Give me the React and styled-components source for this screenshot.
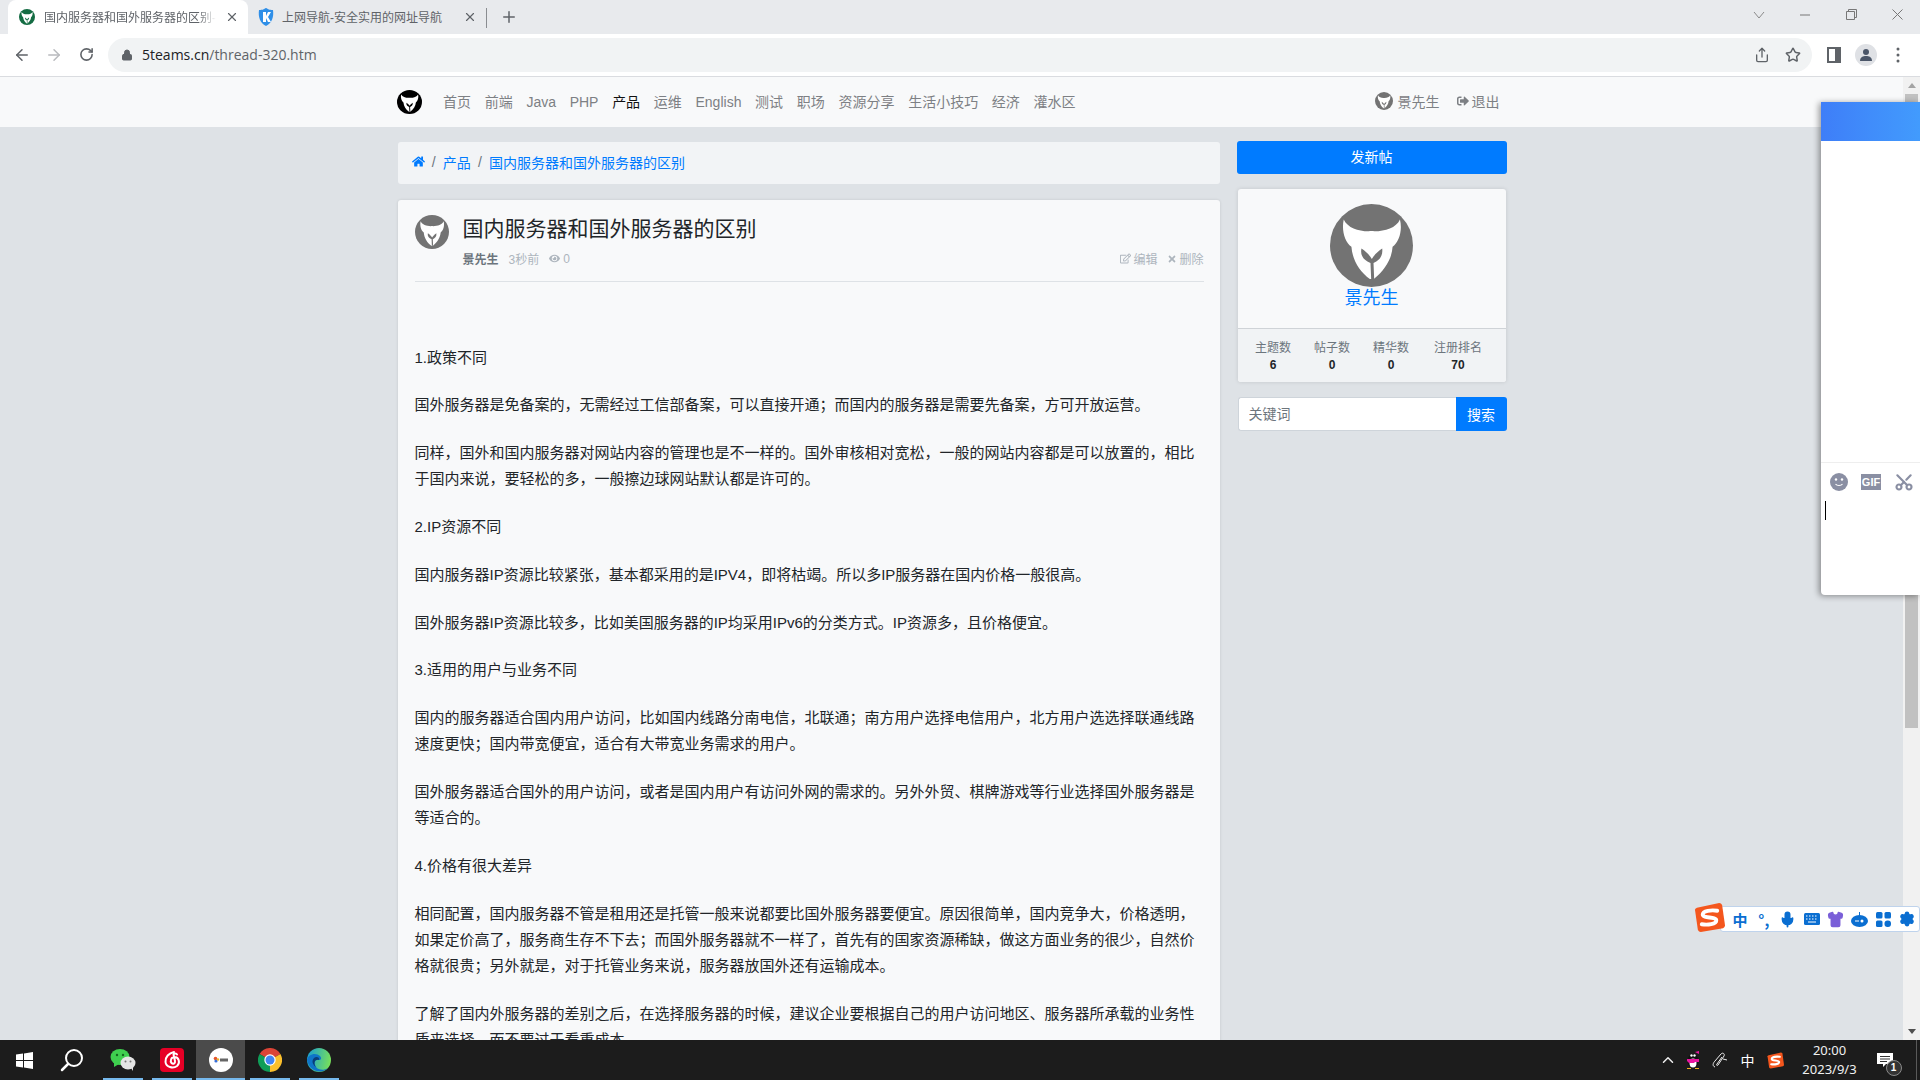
import React from "react";
import styled, { createGlobalStyle } from "styled-components";
import { ArrowLeft, ArrowRight, RotateCw, Lock, Star, Share, X, Plus, Mic, Shirt, Settings, Scissors, ChevronUp } from "lucide-react";
import { FaHome, FaRegEdit, FaTimes, FaEye, FaSignOutAlt } from "react-icons/fa";

const GlobalStyle = createGlobalStyle`
html, body { margin: 0; padding: 0; height: 100%; overflow: hidden; }
body { font-family: "Liberation Sans", "Noto Sans CJK SC", sans-serif; color: #212529; }
* { box-sizing: border-box; }
`

const Screen = styled.div`
position: relative;
display: flex;
flex-direction: column;
height: 100vh;
overflow: hidden;
background-color: #dee2e6;
`

/* browser chrome */
const TabStrip = styled.div`
display: flex;
align-items: stretch;
height: 34px;
padding-left: 8px;
background-color: #e8eaed;
flex-shrink: 0;
`
const Tab = styled.div`
display: flex;
align-items: center;
width: ${p => p.$active ? 240 : 238}px;
padding: 0 9px 0 ${p => p.$active ? 11 : 10}px;
gap: ${p => p.$active ? 9 : 8}px;
background-color: ${p => p.$active ? "#fff" : "transparent"};
border-radius: 8px 8px 0 0;
font-size: 12px;
color: #5f6368;
`
const TabTitle = styled.span`
flex: 1;
padding-bottom: 2px;
white-space: nowrap;
overflow: hidden;
-webkit-mask-image: ${p => p.$fade ? "linear-gradient(to right, #000 90%, transparent)" : "none"};
`
const TabClose = styled(X)`
width: 14px;
height: 14px;
color: #5f6368;
flex-shrink: 0;
`
const TabDivider = styled.div`
width: 1px;
height: 20px;
margin-top: 8px;
background-color: #8a8d91;
`
const NewTab = styled(Plus)`
width: 18px;
height: 18px;
margin: 8px 0 0 13px;
color: #5f6368;
`
const WindowButtons = styled.div`
display: flex;
margin-left: auto;
`
const WindowButton = styled.div`
width: 46px;
display: flex;
align-items: center;
justify-content: center;
padding-bottom: 5px;
color: #777;
`
const Toolbar = styled.div`
display: flex;
align-items: center;
height: 43px;
padding: 0 6px 1px;
background-color: #fff;
border-bottom: 1px solid #dadce0;
flex-shrink: 0;
`
const ToolButton = styled.div`
width: 32px;
display: flex;
justify-content: center;
align-items: center;
color: ${p => p.$muted ? "#b9bbbe" : "#5f6368"};
`
const UrlPill = styled.div`
flex: 1;
display: flex;
align-items: center;
height: 34px;
margin: 0 6px;
padding: 0 11px 0 13px;
border-radius: 17px;
background-color: #f1f3f4;
font-size: 14px;
font-family: "Open Sans", sans-serif;
color: #5f6368;
`
const UrlHost = styled.span`
color: #202124;
margin-left: 9px;
`
const UrlActions = styled.div`
display: flex;
margin-left: auto;
gap: 15px;
color: #5f6368;
`
const PanelIcon = styled.div`
width: 14px;
height: 16px;
border: 2px solid #5f6368;
border-right-width: 6px;
`
const ProfileCircle = styled.div`
width: 22px;
height: 22px;
border-radius: 50%;
background-color: #dfe1e5;
display: flex;
align-items: center;
justify-content: center;
`

/* page */
const Viewport = styled.div`
position: relative;
display: flex;
flex: 1;
min-height: 0;
`
const Page = styled.div`
flex: 1;
min-width: 0;
overflow: hidden;
`
const Navbar = styled.div`
height: 50px;
background-color: #f8f9fa;
`
const Container = styled.div`
width: 1140px;
margin: 0 auto;
padding: 0 15px;
`
const NavInner = styled(Container)`
display: flex;
align-items: center;
height: 100%;
font-size: 14px;
`
const NavLinks = styled.div`
display: flex;
align-items: baseline;
gap: 13.7px;
margin-left: 21.5px;
padding-bottom: 2px;
`
const NavLink = styled.span`
color: ${p => p.$active ? "#111" : "#7d8084"};
`
const NavUser = styled.div`
display: flex;
align-items: center;
margin-left: auto;
padding: 0 7px 2px 0;
color: #7d8084;
gap: 5px;
`
const Logout = styled.span`
display: flex;
align-items: center;
gap: 3px;
margin-left: 12px;
`
const MainGrid = styled(Container)`
display: grid;
grid-template-columns: 825px 270px;
gap: 15px;
padding-top: 15px;
`
const Breadcrumb = styled.div`
display: flex;
align-items: center;
height: 42px;
margin: 0 1.5px 16px;
padding: 0 13.5px 3px;
gap: 7.2px;
font-size: 14px;
border-radius: 3px;
background-color: #f2f4f6;
color: #6c757d;
`
const Crumb = styled.span`
color: #007bff;
display: flex;
`
const PostCard = styled.div`
margin: 0 1.5px;
padding: 15px 16.5px;
border-radius: 3px;
background-color: #f8f9fa;
box-shadow: 0 0 3px rgba(0, 0, 0, 0.12);
`
const PostHead = styled.div`
display: flex;
gap: 14px;
height: 67px;
border-bottom: 1px solid #dee2e6;
`
const PostHeadMain = styled.div`
flex: 1;
`
const PostTitle = styled.div`
font-size: 21px;
line-height: 28px;
margin-bottom: 7px;
color: #212529;
`
const MetaRow = styled.div`
display: flex;
align-items: center;
font-size: 12px;
color: #adb5bd;
`
const MetaAuthor = styled.span`
font-weight: bold;
color: #6c757d;
margin-right: 10px;
`
const MetaItem = styled.span`
display: flex;
align-items: center;
gap: 3px;
margin-right: 10px;
`
const MetaActions = styled.div`
display: flex;
gap: 10px;
margin-left: auto;
`
const MetaAction = styled.span`
display: flex;
align-items: center;
gap: 2px;
`
const Article = styled.div`
padding-top: 62.5px;
font-size: 15px;
line-height: 26.25px;
color: #212529;
`
const Para = styled.p`
margin: 0 0 21.5px;
`
const Sidebar = styled.div`
display: flex;
flex-direction: column;
margin-top: -1px;
`
const NewPostButton = styled.div`
height: 33px;
margin-bottom: 15px;
padding-bottom: 3px;
display: flex;
align-items: center;
justify-content: center;
border-radius: 3px;
background-color: #007bff;
color: #fff;
font-size: 14px;
`
const UserCard = styled.div`
margin: 0 1px 15px;
height: 193px;
border-radius: 3px;
background-color: #f8f9fa;
box-shadow: 0 0 4px rgba(0, 0, 0, 0.12);
overflow: hidden;
`
const UserTop = styled.div`
height: 140px;
padding-top: 15px;
display: flex;
flex-direction: column;
align-items: center;
border-bottom: 1px solid #cfd3d7;
`
const UserName = styled.div`
font-size: 18px;
line-height: 22px;
color: #007bff;
`
const StatRow = styled.div`
display: grid;
grid-template-columns: 59px 59px 59px 75px;
padding: 9px 0 0 6px;
height: 53px;
background-color: #f1f3f5;
text-align: center;
font-size: 12px;
color: #6c757d;
`
const StatValue = styled.div`
font-weight: bold;
color: #212529;
margin-top: 3px;
`
const SearchRow = styled.div`
display: flex;
margin-left: 1px;
height: 34px;
`
const SearchInput = styled.input`
width: 218px;
height: 100%;
padding: 0 10px;
border: 1px solid #ced4da;
border-right: 0;
border-radius: 3px 0 0 3px;
font-size: 14px;
font-family: "Liberation Sans", "Noto Sans CJK SC", sans-serif;
background-color: #fff;
&::placeholder { color: #6c757d; }
`
const SearchButton = styled.div`
flex: 1;
display: flex;
align-items: center;
justify-content: center;
border-radius: 0 3px 3px 0;
background-color: #007bff;
color: #fff;
font-size: 14px;
`

/* scrollbar */
const Scrollbar = styled.div`
width: 17px;
flex-shrink: 0;
display: flex;
flex-direction: column;
align-items: center;
background-color: #f1f1f1;
`
const ScrollArrow = styled.div`
height: 17px;
flex-shrink: 0;
display: flex;
align-items: center;
justify-content: center;
&::before {
  content: "";
  border-left: 4px solid transparent;
  border-right: 4px solid transparent;
  ${p => p.$down ? "border-top: 5px solid #505050;" : "border-bottom: 5px solid #a3a3a3;"}
}
`
const ScrollThumb = styled.div`
width: 13px;
height: 634px;
background-color: #c1c1c1;
`
const ScrollGap = styled.div`
flex: 1;
`

/* floating chat window */
const ChatWindow = styled.div`
position: absolute;
top: 25px;
right: 0;
width: 99px;
height: 493px;
display: flex;
flex-direction: column;
background-color: #fff;
border-radius: 0 0 0 4px;
box-shadow: -2px 1px 6px rgba(0, 0, 0, 0.4);
`
const ChatHeader = styled.div`
height: 39px;
background: linear-gradient(90deg, #3e7ef8, #429bfd);
`
const ChatMessages = styled.div`
height: 322px;
border-bottom: 1px solid #eeeeee;
`
const ChatTools = styled.div`
display: flex;
align-items: center;
gap: 13px;
height: 38px;
padding-left: 9px;
color: #8a8fa3;
`
const GifIcon = styled.div`
width: 20px;
height: 16px;
background-color: #8a8fa3;
color: #fff;
font-size: 11px;
font-weight: bold;
line-height: 16px;
text-align: center;
`
const ScissorsIcon = styled(Scissors)`
width: 20px;
height: 20px;
transform: rotate(-90deg);
`
const Caret = styled.div`
width: 1px;
height: 19px;
margin-left: 4px;
background-color: #000;
`

/* IME toolbar */
const ImeBar = styled.div`
position: absolute;
right: 0;
bottom: 108px;
width: 200px;
height: 26px;
display: flex;
align-items: center;
padding-left: 7px;
background-color: #fff;
border: 1px solid #bfd3ec;
border-radius: 3px;
color: #0a6ed1;
`
const ImeCell = styled.div`
width: 24px;
display: flex;
align-items: center;
justify-content: center;
font-size: 15px;
font-weight: bold;
font-family: "Noto Sans CJK SC", sans-serif;
`
const ImeLogo = styled.div`
position: absolute;
left: -27px;
top: -5px;
`

/* taskbar */
const Taskbar = styled.div`
display: flex;
height: 40px;
flex-shrink: 0;
background-color: #1c1c1c;
`
const TaskPlain = styled.div`
width: 48px;
display: flex;
align-items: center;
justify-content: center;
`
const TaskApps = styled.div`
display: flex;
margin-left: 2px;
`
const TaskApp = styled.div`
position: relative;
width: 49px;
display: flex;
align-items: center;
justify-content: center;
background-color: ${p => p.$active ? "#4b4b4b" : "transparent"};
&::after {
  content: "";
  position: absolute;
  left: ${p => p.$active ? 0 : 5}px;
  right: ${p => p.$active ? 0 : 4}px;
  bottom: 0;
  height: 2px;
  background-color: #76b9ed;
}
`
const Tray = styled.div`
display: flex;
align-items: center;
margin-left: auto;
color: #fff;
`
const TrayItem = styled.div`
position: relative;
width: ${p => p.$w}px;
display: flex;
align-items: center;
justify-content: center;
font-size: 14px;
`
const Clock = styled.div`
width: 80px;
text-align: center;
font-size: 13px;
line-height: 19px;
color: #f0f0f0;
font-family: "Noto Sans", sans-serif;
`
const NoticeBadge = styled.div`
position: absolute;
right: -2px;
top: 7px;
width: 16px;
height: 16px;
border-radius: 50%;
background-color: #333;
border: 1px solid #8a8a8a;
font-size: 10px;
font-weight: bold;
line-height: 14px;
text-align: center;
`
const ShowDesktop = styled.div`
width: 17.5px;
height: 100%;
border-right: 1px solid #5a5a5a;
margin-right: 3px;
`

const TeamLogo = ({ size, bg = "#737373", fg = "#fff", height }) => (
    <svg width={size} height={height || size} viewBox="331 222 248 248" preserveAspectRatio="none">
        <circle cx="455" cy="346" r="124" fill={bg} />
        <path fill={fg} d="M372 268 C385 295 420 305 455 303 C490 305 528 295 540 268 C548 300 538 335 518 350 C516 385 495 420 462 446 L450 446 C420 425 398 390 395 350 C375 335 365 300 372 268 Z" />
        <path fill={bg} d="M425 355 C440 365 450 376 456 386 C462 376 472 365 487 355 C490 378 477 392 461 398 L463 446 L454 446 L452 398 C435 392 420 378 425 355 Z" />
    </svg>
)

const ShieldK = () => (
    <svg width="16" height="18" viewBox="0 0 16 18">
        <path fill="#2f8fe8" d="M1 2 C5 2 6 1 8 0 C10 1 11 2 15 2 C16 9 14 15 8 18 C2 15 0 9 1 2 Z" />
        <path fill="#fff" d="M5 4 H8 V8 L10 4 H13 L10 9 L13 14 H10 L8 10 V14 H5 Z" />
    </svg>
)

const SogouLogo = ({ size = 31 }) => (
    <svg width={size} height={size} viewBox="0 0 32 32">
        <path fill="#f4561d" d="M3 6 L26 1 Q28 1 29 3 L32 24 Q32 26 30 27 L7 31 Q5 31 4 29 L1 8 Q1 7 3 6 Z" />
        <path fill="none" stroke="#fff" strokeWidth="4" strokeLinecap="round" d="M24 9 C18 8 9 9 9 13 C9 17 23 15 23 19 C23 23 14 24 8 23" />
    </svg>
)

const WindowsIcon = () => (
    <svg width="17" height="17" viewBox="0 0 17 17" fill="#fff">
        <path d="M0 2.5 L7 1.5 V8 H0 Z M8 1.4 L17 0 V8 H8 Z M0 9 H7 V15.5 L0 14.5 Z M8 9 H17 V17 L8 15.6 Z" />
    </svg>
)

const SearchIcon = () => (
    <svg width="24" height="24" viewBox="0 0 24 24" fill="none" stroke="#fff" strokeWidth="2">
        <circle cx="14" cy="10" r="8" />
        <path d="M8 16 L2 22" strokeWidth="2.5" strokeLinecap="round" />
    </svg>
)

const WeChatIcon = () => (
    <svg width="26" height="24" viewBox="0 0 26 24">
        <ellipse cx="10" cy="9" rx="9.5" ry="8" fill="#3fcf4f" />
        <path d="M4 14 L4 19 L9 16 Z" fill="#3fcf4f" />
        <circle cx="7" cy="7" r="1.2" fill="#14691f" />
        <circle cx="13" cy="7" r="1.2" fill="#14691f" />
        <ellipse cx="18" cy="15" rx="7.5" ry="6.5" fill="#e4e4e4" />
        <path d="M21 20 L23 23 L23 18 Z" fill="#e4e4e4" />
        <circle cx="15.5" cy="13.5" r="1" fill="#777" />
        <circle cx="20.5" cy="13.5" r="1" fill="#777" />
    </svg>
)

const NeteaseIcon = () => (
    <svg width="24" height="24" viewBox="0 0 24 24">
        <rect width="24" height="24" rx="4" fill="#e60026" />
        <path fill="none" stroke="#fff" strokeWidth="2" strokeLinecap="round" d="M14 4 C9 5 5 9 5.500 14 C6 19 13 21 17 18 C20.500 15 19 9 14.500 9 C11 9 10 13 11.500 15 C13 16.500 15.500 15.500 15 13 L13.500 6.500 C14 5 16.500 5 17 6.500" />
    </svg>
)

const MeetingIcon = () => (
    <svg width="24" height="24" viewBox="0 0 24 24">
        <circle cx="12" cy="12" r="12" fill="#fff" />
        <circle cx="6.500" cy="10.500" r="1.800" fill="#e8562a" />
        <circle cx="7" cy="13" r="1.600" fill="#3a6fd8" />
        <circle cx="9" cy="11.500" r="1.200" fill="#f0b429" />
        <rect x="11" y="10.500" width="8" height="3" fill="#666" />
    </svg>
)

const ChromeIcon = () => (
    <svg width="24" height="24" viewBox="0 0 24 24">
        <path fill="#db4437" d="M12 12 L1.600 6 A12 12 0 0 1 22.400 6 Z" />
        <path fill="#fbc02d" d="M12 12 L22.400 6 A12 12 0 0 1 12 24 Z" />
        <path fill="#0f9d58" d="M12 12 L12 24 A12 12 0 0 1 1.600 6 Z" />
        <circle cx="12" cy="12" r="5.700" fill="#fff" />
        <circle cx="12" cy="12" r="4.500" fill="#4285f4" />
    </svg>
)

const EdgeIcon = () => (
    <svg width="24" height="24" viewBox="0 0 24 24">
        <defs>
            <linearGradient id="edgeTop" x1="0" y1="0.300" x2="1" y2="0.500">
                <stop offset="0" stopColor="#1a9fd0" />
                <stop offset="1" stopColor="#78e05a" />
            </linearGradient>
        </defs>
        <circle cx="12" cy="12" r="12" fill="url(#edgeTop)" />
        <path fill="#0f74c8" d="M0 12 C1 6 9 4 13 8 C15 10 14 12 12 12 C8 11 6 15 9 19 C11 22 17 23 21 20 C16 26 3 25 0 12 Z" />
        <path fill="#0a3d78" d="M12 12 C8 11 6 15 9 19 C6 17 4 13 7 10 C9 8 13 9 12 12 Z" />
    </svg>
)

const QQIcon = () => (
    <svg width="16" height="18" viewBox="0 0 16 18">
        <ellipse cx="8" cy="10" rx="5.500" ry="7" fill="#111" />
        <ellipse cx="8" cy="12" rx="3.500" ry="4.500" fill="#fff" />
        <circle cx="6.500" cy="4.500" r="1.200" fill="#fff" />
        <circle cx="9.500" cy="4.500" r="1.200" fill="#fff" />
        <path d="M2 8 H14 V11 H10 L9 12 H4 L2 10 Z" fill="#e815a0" />
        <path d="M10 1 L14 0 V3 Z" fill="#e815a0" />
        <path d="M2 17 H6 V18 H2 Z M10 17 H14 V18 H10 Z" fill="#f2b01e" />
    </svg>
)

const PenIcon = () => (
    <svg width="17" height="17" viewBox="0 0 17 17" fill="none" stroke="#eee" strokeWidth="1">
        <path d="M4 15 C1 14 2 11 4 9 L10 2 C12 0 14 2 13 4 L7 13 C6 14 5 13 6 12 L11 5" />
        <path d="M12 7 L16 8" />
    </svg>
)

const NoticeIcon = () => (
    <svg width="16" height="15" viewBox="0 0 16 15">
        <path fill="#fff" d="M0 0 H16 V11 H9 L6 14 V11 H0 Z" />
        <path stroke="#333" d="M3 3.500 H13 M3 6 H13 M3 8.500 H10" />
    </svg>
)

const SmileIcon = () => (
    <svg width="18" height="18" viewBox="0 0 18 18">
        <circle cx="9" cy="9" r="9" fill="#8a8fa3" />
        <circle cx="6" cy="6.500" r="1.200" fill="#fff" />
        <circle cx="12" cy="6.500" r="1.200" fill="#fff" />
        <path d="M5.500 11 C7 13 11 13 12.500 11" stroke="#fff" strokeWidth="1.200" fill="none" />
    </svg>
)

const KeyboardIcon = () => (
    <svg width="16" height="12" viewBox="0 0 16 12">
        <rect width="16" height="12" rx="1.500" fill="#0a6ed1" />
        <path stroke="#fff" strokeDasharray="1.500 1.500" d="M2 3 H14 M2 6 H14" />
        <path stroke="#fff" d="M4 9 H12" />
    </svg>
)

const RobotIcon = () => (
    <svg width="17" height="15" viewBox="0 0 17 15">
        <ellipse cx="8.500" cy="9" rx="8.500" ry="6" fill="#0a6ed1" />
        <rect x="8" y="0" width="1" height="4" fill="#0a6ed1" />
        <circle cx="11" cy="9" r="1.500" fill="#fff" />
        <rect x="4" y="8.500" width="4" height="1" fill="#fff" />
    </svg>
)

const GridIcon = () => (
    <svg width="15" height="15" viewBox="0 0 15 15" fill="#0a6ed1">
        <rect width="6.500" height="6.500" rx="1.500" />
        <rect x="8.500" width="6.500" height="6.500" rx="1.500" />
        <rect y="8.500" width="6.500" height="6.500" rx="1.500" />
        <rect x="8.500" y="8.500" width="6.500" height="6.500" rx="3" />
    </svg>
)

const navItems = ["首页", "前端", "Java", "PHP", "产品", "运维", "English", "测试", "职场", "资源分享", "生活小技巧", "经济", "灌水区"]

const stats = [
    { label: "主题数", value: 6 },
    { label: "帖子数", value: 0 },
    { label: "精华数", value: 0 },
    { label: "注册排名", value: 70 },
]

const paragraphs = [
    "1.政策不同",
    "国外服务器是免备案的，无需经过工信部备案，可以直接开通；而国内的服务器是需要先备案，方可开放运营。",
    "同样，国外和国内服务器对网站内容的管理也是不一样的。国外审核相对宽松，一般的网站内容都是可以放置的，相比于国内来说，要轻松的多，一般擦边球网站默认都是许可的。",
    "2.IP资源不同",
    "国内服务器IP资源比较紧张，基本都采用的是IPV4，即将枯竭。所以多IP服务器在国内价格一般很高。",
    "国外服务器IP资源比较多，比如美国服务器的IP均采用IPv6的分类方式。IP资源多，且价格便宜。",
    "3.适用的用户与业务不同",
    "国内的服务器适合国内用户访问，比如国内线路分南电信，北联通；南方用户选择电信用户，北方用户选选择联通线路速度更快；国内带宽便宜，适合有大带宽业务需求的用户。",
    "国外服务器适合国外的用户访问，或者是国内用户有访问外网的需求的。另外外贸、棋牌游戏等行业选择国外服务器是等适合的。",
    "4.价格有很大差异",
    "相同配置，国内服务器不管是租用还是托管一般来说都要比国外服务器要便宜。原因很简单，国内竞争大，价格透明，如果定价高了，服务商生存不下去；而国外服务器就不一样了，首先有的国家资源稀缺，做这方面业务的很少，自然价格就很贵；另外就是，对于托管业务来说，服务器放国外还有运输成本。",
    "了解了国内外服务器的差别之后，在选择服务器的时候，建议企业要根据自己的用户访问地区、服务器所承载的业务性质来选择，而不要过于看重成本。",
]

const App = () => {
    return (
        <Screen>
            <GlobalStyle />
            <TabStrip>
                <Tab $active>
                    <TeamLogo size={16} bg="#146c43" />
                    <TabTitle $fade>国内服务器和国外服务器的区别-互联网</TabTitle>
                    <TabClose />
                </Tab>
                <Tab>
                    <ShieldK />
                    <TabTitle>上网导航-安全实用的网址导航</TabTitle>
                    <TabClose />
                </Tab>
                <TabDivider />
                <NewTab />
                <WindowButtons>
                    <WindowButton>
                        <svg width="12" height="8" viewBox="0 0 12 8" fill="none" stroke="#8a8a8a"><path d="M1 1 L6 7 L11 1" /></svg>
                    </WindowButton>
                    <WindowButton>
                        <svg width="10" height="2" viewBox="0 0 10 2" stroke="#777"><path d="M0 1 H10" /></svg>
                    </WindowButton>
                    <WindowButton>
                        <svg width="11" height="11" viewBox="0 0 11 11" fill="none" stroke="#777"><path d="M.5 2.500 H8.500 V10.500 H.5 Z M2.500 2.500 V.5 H10.500 V8.500 H8.500" /></svg>
                    </WindowButton>
                    <WindowButton>
                        <svg width="11" height="11" viewBox="0 0 11 11" stroke="#777"><path d="M.5 .5 L10.500 10.500 M10.500 .5 L.5 10.500" /></svg>
                    </WindowButton>
                </WindowButtons>
            </TabStrip>
            <Toolbar>
                <ToolButton><ArrowLeft size={18} /></ToolButton>
                <ToolButton $muted><ArrowRight size={18} /></ToolButton>
                <ToolButton><RotateCw size={15} strokeWidth={2.5} /></ToolButton>
                <UrlPill>
                    <Lock size={12} fill="#5f6368" />
                    <UrlHost>5teams.cn</UrlHost>/thread-320.htm
                    <UrlActions>
                        <Share size={16} />
                        <Star size={16} strokeWidth={2.2} />
                    </UrlActions>
                </UrlPill>
                <ToolButton><PanelIcon /></ToolButton>
                <ToolButton>
                    <ProfileCircle>
                        <svg width="14" height="14" viewBox="0 0 14 14" fill="#4a5568">
                            <circle cx="7" cy="4" r="3" />
                            <path d="M1 13 C1 9 4 8 7 8 C10 8 13 9 13 13 Z" />
                        </svg>
                    </ProfileCircle>
                </ToolButton>
                <ToolButton>
                    <svg width="4" height="16" viewBox="0 0 4 16" fill="#5f6368">
                        <circle cx="2" cy="2" r="1.500" /><circle cx="2" cy="8" r="1.500" /><circle cx="2" cy="14" r="1.500" />
                    </svg>
                </ToolButton>
            </Toolbar>
            <Viewport>
                <Page>
                    <Navbar>
                        <NavInner>
                            <TeamLogo size={25} height={24} bg="#000" />
                            <NavLinks>
                                {navItems.map(item => (
                                    <NavLink key={item} $active={item === "产品"}>{item}</NavLink>
                                ))}
                            </NavLinks>
                            <NavUser>
                                <TeamLogo size={18} />
                                <span>景先生</span>
                                <Logout><FaSignOutAlt size={12} />退出</Logout>
                            </NavUser>
                        </NavInner>
                    </Navbar>
                    <MainGrid>
                        <div>
                            <Breadcrumb>
                                <Crumb><FaHome size={13} /></Crumb>/
                                <Crumb>产品</Crumb>/
                                <Crumb>国内服务器和国外服务器的区别</Crumb>
                            </Breadcrumb>
                            <PostCard>
                                <PostHead>
                                    <TeamLogo size={34} />
                                    <PostHeadMain>
                                        <PostTitle>国内服务器和国外服务器的区别</PostTitle>
                                        <MetaRow>
                                            <MetaAuthor>景先生</MetaAuthor>
                                            <MetaItem>3秒前</MetaItem>
                                            <MetaItem><FaEye size={11} /> 0</MetaItem>
                                            <MetaActions>
                                                <MetaAction><FaRegEdit size={11} />编辑</MetaAction>
                                                <MetaAction><FaTimes size={10} />删除</MetaAction>
                                            </MetaActions>
                                        </MetaRow>
                                    </PostHeadMain>
                                </PostHead>
                                <Article>
                                    {paragraphs.map(text => <Para key={text}>{text}</Para>)}
                                </Article>
                            </PostCard>
                        </div>
                        <Sidebar>
                            <NewPostButton>发新帖</NewPostButton>
                            <UserCard>
                                <UserTop>
                                    <TeamLogo size={83} />
                                    <UserName>景先生</UserName>
                                </UserTop>
                                <StatRow>
                                    {stats.map(stat => (
                                        <div key={stat.label}>
                                            {stat.label}
                                            <StatValue>{stat.value}</StatValue>
                                        </div>
                                    ))}
                                </StatRow>
                            </UserCard>
                            <SearchRow>
                                <SearchInput placeholder="关键词" />
                                <SearchButton>搜索</SearchButton>
                            </SearchRow>
                        </Sidebar>
                    </MainGrid>
                </Page>
                <Scrollbar>
                    <ScrollArrow />
                    <ScrollThumb />
                    <ScrollGap />
                    <ScrollArrow $down />
                </Scrollbar>
                <ChatWindow>
                    <ChatHeader />
                    <ChatMessages />
                    <ChatTools>
                        <SmileIcon />
                        <GifIcon>GIF</GifIcon>
                        <ScissorsIcon strokeWidth={2.6} />
                    </ChatTools>
                    <Caret />
                </ChatWindow>
                <ImeBar>
                    <ImeLogo><SogouLogo /></ImeLogo>
                    <ImeCell>中</ImeCell>
                    <ImeCell>°,</ImeCell>
                    <ImeCell><Mic size={17} strokeWidth={2.5} fill="#0a6ed1" /></ImeCell>
                    <ImeCell><KeyboardIcon /></ImeCell>
                    <ImeCell><Shirt size={17} color="#7a5fd8" fill="#7a5fd8" /></ImeCell>
                    <ImeCell><RobotIcon /></ImeCell>
                    <ImeCell><GridIcon /></ImeCell>
                    <ImeCell><Settings size={16} strokeWidth={2.5} fill="#0a6ed1" color="#0a6ed1" /></ImeCell>
                </ImeBar>
            </Viewport>
            <Taskbar>
                <TaskPlain><WindowsIcon /></TaskPlain>
                <TaskPlain><SearchIcon /></TaskPlain>
                <TaskApps>
                    <TaskApp><WeChatIcon /></TaskApp>
                    <TaskApp><NeteaseIcon /></TaskApp>
                    <TaskApp $active><MeetingIcon /></TaskApp>
                    <TaskApp><ChromeIcon /></TaskApp>
                    <TaskApp><EdgeIcon /></TaskApp>
                </TaskApps>
                <Tray>
                    <TrayItem $w={24}><ChevronUp size={18} color="#eee" /></TrayItem>
                    <TrayItem $w={26}><QQIcon /></TrayItem>
                    <TrayItem $w={28}><PenIcon /></TrayItem>
                    <TrayItem $w={28}>中</TrayItem>
                    <TrayItem $w={28}><SogouLogo size={17} /></TrayItem>
                    <Clock>20:00<br />2023/9/3</Clock>
                    <TrayItem $w={30}>
                        <NoticeIcon />
                        <NoticeBadge>1</NoticeBadge>
                    </TrayItem>
                    <ShowDesktop />
                </Tray>
            </Taskbar>
        </Screen>
    )
}

export default App
